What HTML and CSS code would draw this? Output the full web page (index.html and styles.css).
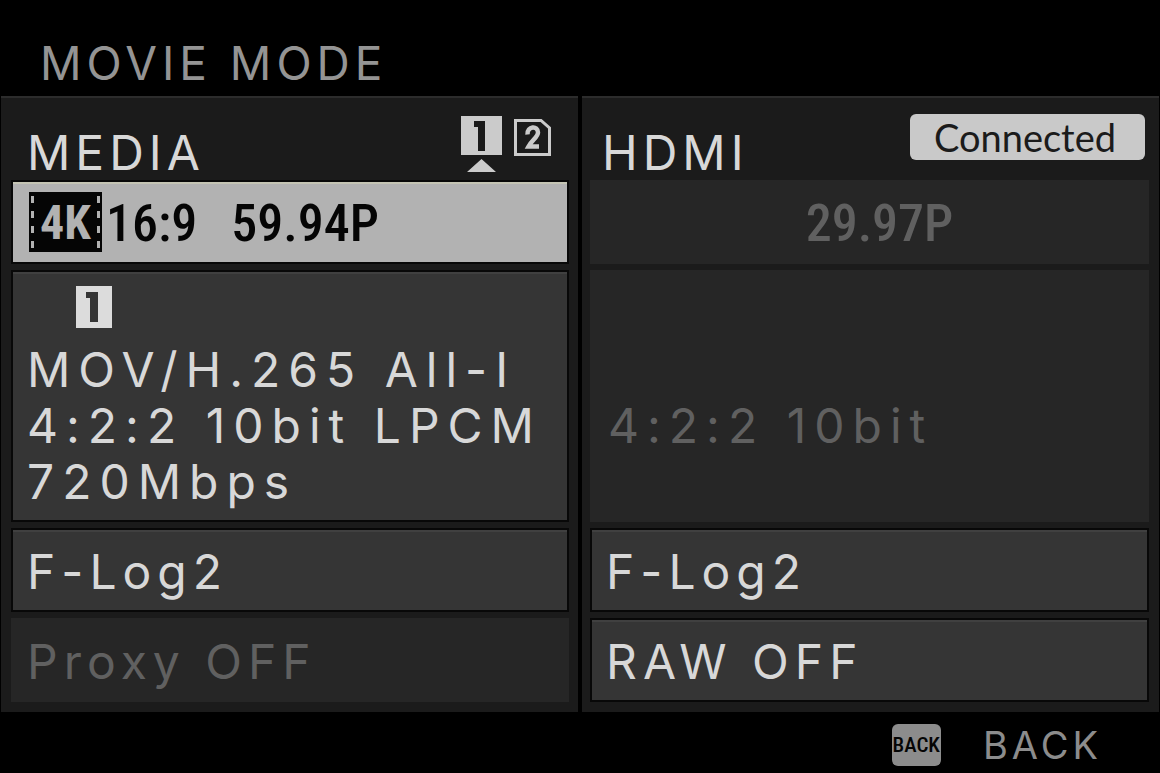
FILE: index.html
```html
<!DOCTYPE html>
<html lang="en">
<head>
<meta charset="utf-8">
<meta name="viewport" content="width=device-width, initial-scale=1">
<title>Movie mode</title>
<link rel="stylesheet" href="styles.css">
</head>
<body class="screen">
<header class="topbar"><h1 class="title">MOVIE MODE</h1></header>
<main class="panels">
  <section class="panel" aria-labelledby="media">
    <div class="panel-head">
      <h2 class="panel-title" id="media">MEDIA</h2>
      <div class="slots">
        <svg class="slot-active" width="41" height="56" viewBox="0 0 41 56" role="img" aria-label="Slot 1 active">
          <path d="M0 0H41V39H0zM6 56 20.500 43 35 56z" fill="#cbcbcb"/>
          <path d="M13 5H24V35H17V11H13z" fill="#1a1a1a"/>
        </svg>
        <svg width="37" height="37" viewBox="0 0 37 37" role="img" aria-label="Slot 2">
          <path d="M1.500 1.500H27L35.500 9V35.500H1.500z" fill="none" stroke="#cbcbcb" stroke-width="3"/>
          <path d="M13.500 15.500C13 7 24 6 24 13.500C24 18 18 21 14.500 27.500H25" fill="none" stroke="#cbcbcb" stroke-width="4.500"/>
        </svg>
      </div>
    </div>
    <button class="row row-selected" type="button">
      <span class="film">4K</span><span class="ratio">16:9</span><span class="rate">59.94P</span>
    </button>
    <button class="row row-detail" type="button">
      <svg class="slot-mark" width="36" height="42" viewBox="0 0 36 42" role="img" aria-label="Slot 1">
        <path d="M0 0H36V42H0z" fill="#dcdcdc"/>
        <path d="M10 6H22V36H14V12H10z" fill="#353535"/>
      </svg>
      <span>MOV/H.265 All-I</span><span>4:2:2 10bit LPCM</span><span>720Mbps</span>
    </button>
    <button class="row" type="button">F-Log2</button>
    <button class="row" type="button" disabled>Proxy OFF</button>
  </section>
  <section class="panel panel-output" aria-labelledby="hdmi">
    <div class="panel-head">
      <h2 class="panel-title" id="hdmi">HDMI</h2>
      <span class="status">Connected</span>
    </div>
    <button class="row row-center" type="button" disabled>29.97P</button>
    <button class="row row-detail row-middle" type="button" disabled><span>4:2:2 10bit</span></button>
    <button class="row" type="button">F-Log2</button>
    <button class="row" type="button">RAW OFF</button>
  </section>
</main>
<footer class="footer">
  <button class="back" type="button"><span class="back-key">BACK</span><span>BACK</span></button>
</footer>
</body>
</html>
```

FILE: styles.css
```css
* { box-sizing: border-box; }

.screen {
  margin: 0;
  min-height: 100vh;
  display: flex;
  flex-direction: column;
  background: #000;
  color: #d8d8d8;
  font-family: Inter, "Liberation Sans", sans-serif;
}

.topbar {
  height: 96px;
  padding: 36px 40px 0;
}

.title,
.panel-title {
  margin: 0;
  font-weight: 400;
  letter-spacing: 5px;
}

.title {
  font-size: 46px;
  line-height: 54px;
  color: #949494;
}

.panels {
  flex: 1;
  display: grid;
  grid-template-columns: 1fr 1fr;
  gap: 4px;
  padding: 0 1px;
}

.panel {
  display: grid;
  grid-template-rows: 76px 84px 252px 84px 84px;
  row-gap: 6px;
  padding: 0 9px 9px 10px;
  background: #1b1b1b;
  border-top: 2px solid #2c2c2c;
}

.panel-output { padding: 0 10px 9px 8px; }

.panel-head {
  display: flex;
  justify-content: space-between;
  align-items: flex-start;
}

.panel-title {
  padding: 26px 0 0 16px;
  font-size: 48px;
  line-height: 58px;
}

.panel-output .panel-title { padding-left: 12px; }

.slots {
  display: flex;
  gap: 12px;
  padding: 18px 18px 0 0;
}

.slots svg + svg { margin-top: 3px; }

.status {
  margin: 16px 4px 0 0;
  padding: 0 29px 0 24px;
  border-radius: 6px;
  background: #c9c9c9;
  color: #1b1b1b;
  font: 400 38px/46px Lato, sans-serif;
}

.row {
  display: flex;
  align-items: center;
  width: 100%;
  padding: 4px 14px 0;
  border: 2px solid #080808;
  background: #353535;
  box-shadow: inset 0 2px #404040;
  color: #d8d8d8;
  font: 400 48px/56px Inter, "Liberation Sans", sans-serif;
  letter-spacing: 6px;
  text-align: left;
}

.row:disabled {
  border-color: #262626;
  background: #262626;
  box-shadow: none;
  color: #606060;
}

.row-selected {
  padding: 0 16px;
  background: #b2b2b2;
  box-shadow: inset 0 2px #c4c4b4;
  color: #050505;
}

.row-selected,
.row-center {
  font-family: "Roboto Condensed", "Liberation Sans Narrow", sans-serif;
  font-size: 52px;
  font-weight: 500;
  letter-spacing: normal;
}

.row-center { justify-content: center; padding: 4px 0 0 20px; }

.film {
  flex: none;
  width: 73px;
  height: 60px;
  border: 2px solid #050505;
  border-width: 4px 2px;
  background:
    repeating-linear-gradient(#b2b2b2 0 7px, #050505 7px 15px) left / 3px 100% no-repeat,
    repeating-linear-gradient(#b2b2b2 0 7px, #050505 7px 15px) right / 3px 100% no-repeat,
    #050505;
  color: #b2b2b2;
  font-size: 48px;
  font-weight: 700;
  line-height: 54px;
  text-align: center;
}

.ratio { margin: 4px 34px 0 4px; }

.rate { margin-top: 4px; }

.row-detail {
  flex-direction: column;
  align-items: flex-start;
  justify-content: flex-start;
  padding-top: 14px;
  letter-spacing: 8px;
}

.row-middle { justify-content: center; padding: 60px 16px 0; }

.slot-mark { margin: 0 0 14px 49px; }

.footer {
  display: flex;
  justify-content: flex-end;
  padding: 8px 58px 3px;
}

.back {
  display: flex;
  align-items: center;
  gap: 42px;
  padding: 0;
  border: 0;
  background: none;
  color: #8c8c8c;
  font: 400 38px/50px Inter, "Liberation Sans", sans-serif;
  letter-spacing: 4px;
}

.back-key {
  padding: 0 1px;
  border-radius: 6px;
  background: #8c8c8c;
  color: #050505;
  font: 500 21px/42px "Roboto Condensed", "Liberation Sans Narrow", sans-serif;
  letter-spacing: normal;
}
```
